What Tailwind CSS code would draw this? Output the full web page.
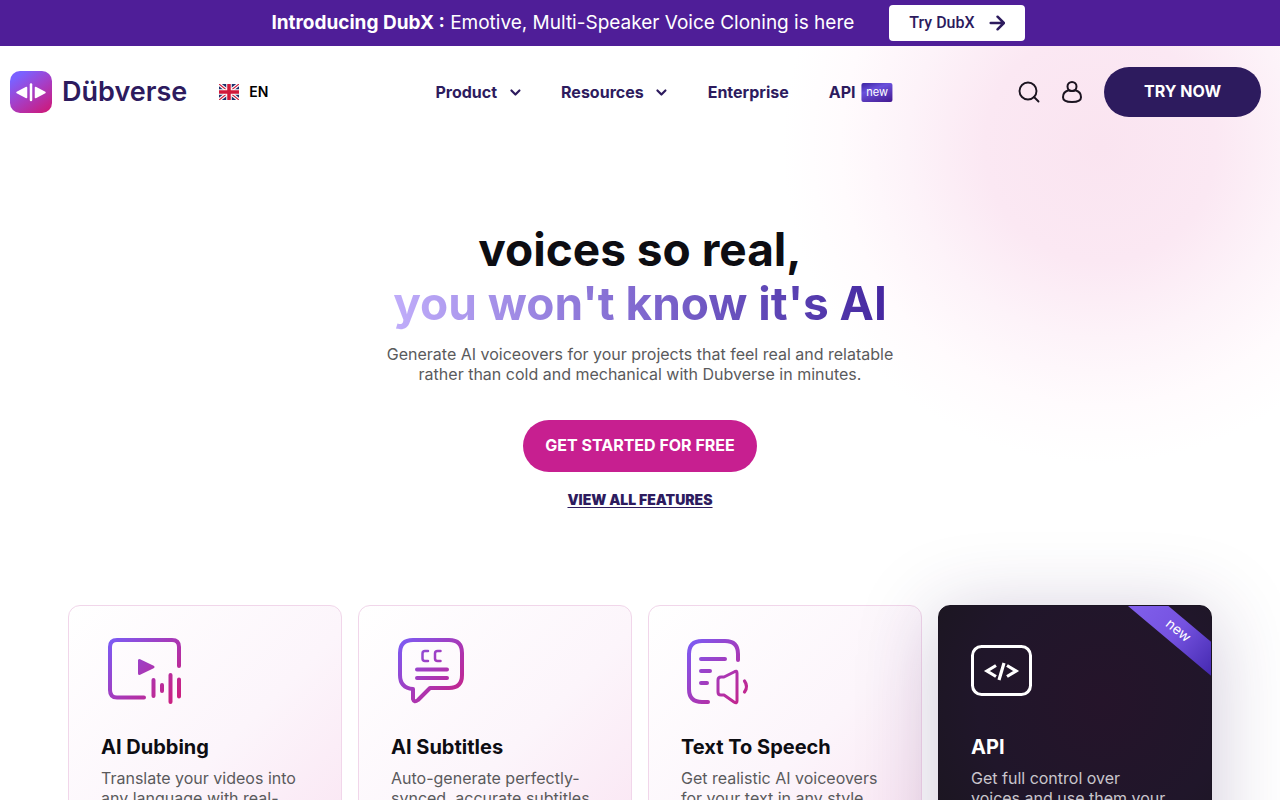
<!DOCTYPE html>
<html lang="en">
<head>
  <meta charset="UTF-8">
  <title>Dübverse</title>
  <meta name="viewport" content="width=device-width, initial-scale=1.0">
  <script src="https://cdn.jsdelivr.net/npm/@tailwindcss/browser@4"></script>
</head>
<body class="bg-white font-['Inter',sans-serif] text-[#0d0d12] overflow-x-hidden">
  <!-- Announcement bar -->
  <div class="relative z-10 bg-[#4f1e98] text-white flex items-center justify-center gap-[35px] pl-4 py-[5px]">
    <p class="text-[19px] leading-6"><strong class="font-bold">Introducing DubX :</strong> Emotive, Multi-Speaker Voice Cloning is here</p>
    <a href="#dubx" class="flex items-center gap-[14px] h-9 px-5 rounded bg-white text-[#2d1b5e] font-['Roboto',sans-serif] font-medium text-base">
      Try DubX
      <svg class="w-4 h-4" viewBox="0 0 14 14" fill="none" stroke="currentColor" stroke-width="2.2" stroke-linecap="round" stroke-linejoin="round"><path d="M1.500 7H13M7.500 1.500 13 7l-5.500 5.500"/></svg>
    </a>
  </div>

  <div class="relative overflow-hidden">
    <!-- Pink glow -->
    <div class="absolute -top-[240px] -right-[160px] w-[680px] h-[680px] bg-[radial-gradient(circle,#fae4f0_0%,#fbe8f3_24%,#fdf3f9_40%,#fffbfd_54%,#ffffff_66%)]"></div>

    <header class="relative flex items-center justify-between h-[92px] pl-[10px] pr-[19px]">
      <div class="flex items-center gap-8">
        <a href="#home" class="flex items-center gap-[10px]">
          <svg class="w-[42px] h-[42px]" viewBox="0 0 42 42">
            <defs>
              <linearGradient id="logo" x1="0.150" y1="0" x2="0.850" y2="1">
                <stop offset="0.1" stop-color="#7b61ff"/>
                <stop offset="0.5" stop-color="#a53fc8"/>
                <stop offset="1" stop-color="#cc1a7c"/>
              </linearGradient>
            </defs>
            <rect width="42" height="42" rx="10" fill="url(#logo)"/>
            <g fill="#fff" stroke="#fff" stroke-linejoin="round">
              <path d="M16.500 16.500v10L7 21.500zM25.500 16.500v10l9.500-5z" stroke-width="1.500"/>
              <path d="M21 13.500v15.500" stroke-width="2.500" stroke-linecap="round"/>
            </g>
          </svg>
          <span class="text-[27px] leading-8 font-semibold text-[#2d1b5e]">Dübverse</span>
        </a>
        <button type="button" class="flex items-center gap-[10px] text-sm font-semibold text-black">
          <svg class="w-5 h-4" viewBox="0 0 20 16">
            <path fill="#1d2f6b" d="M0 0h20v16H0z"/>
            <path stroke="#fff" stroke-width="3.500" d="m0 0 20 16M20 0 0 16"/>
            <path stroke="#d0223f" stroke-width="1.200" d="m0 0 20 16M20 0 0 16"/>
            <path stroke="#fff" stroke-width="5.500" d="M10 0v16M0 8h20"/>
            <path stroke="#d0183a" stroke-width="3.500" d="M10 0v16M0 8h20"/>
          </svg>
          EN
        </button>
      </div>

      <nav class="absolute left-1/2 -translate-x-1/2 ml-6 flex items-center gap-10 text-base font-bold text-[#2d1b5e]">
        <button type="button" class="flex items-center gap-3">Product
          <svg class="w-3 h-3" viewBox="0 0 12 12" fill="none" stroke="currentColor" stroke-width="2.200" stroke-linecap="round" stroke-linejoin="round"><path d="m2 4.500 4 4 4-4"/></svg>
        </button>
        <button type="button" class="flex items-center gap-3">Resources
          <svg class="w-3 h-3" viewBox="0 0 12 12" fill="none" stroke="currentColor" stroke-width="2.200" stroke-linecap="round" stroke-linejoin="round"><path d="m2 4.500 4 4 4-4"/></svg>
        </button>
        <a href="#enterprise">Enterprise</a>
        <a href="#api" class="flex items-center gap-[6px]">API
          <span class="w-[31px] h-[19px] rounded-xs bg-linear-160 from-[#3a22a0] via-[#6a50dc] via-35% to-[#43168f] text-white text-[11px] leading-[18px] text-center font-normal">new</span>
        </a>
      </nav>

      <div class="flex items-center gap-[22px]">
        <button type="button" aria-label="Search">
          <svg class="w-[22px] h-[22px]" viewBox="0 0 22 22" fill="none" stroke="#1b1420" stroke-width="1.900" stroke-linecap="round"><circle cx="10" cy="10" r="8.500"/><path d="m16 16 4.500 4.500"/></svg>
        </button>
        <button type="button" aria-label="Account">
          <svg class="w-5 h-[22px]" viewBox="0 0 20 22" fill="none" stroke="#1b1420" stroke-width="2"><circle cx="10" cy="5.500" r="4.500"/><path d="M6.500 9.300C3 10.300 1 13 1 16.200 1 19.500 4 21 10 21s9-1.500 9-4.800c0-3.200-2-5.900-5.500-6.900-2.200.9-4.800.9-7 0z"/></svg>
        </button>
        <a href="#try" class="h-[50px] px-10 rounded-full bg-[#2d1b5e] text-white text-base leading-[48px] font-bold">TRY NOW</a>
      </div>
    </header>

    <main class="relative">
      <section class="flex flex-col items-center text-center pt-[84px]">
        <h1 class="text-[46px] leading-[54px] font-bold">
          voices so real,<br>
          <span class="inline-block bg-linear-to-r from-[#c0adfa] via-[#8068cf] to-[#4526a0] bg-clip-text text-transparent">you won't know it's AI</span>
        </h1>
        <p class="mt-[14px] text-base leading-5 text-[#5a5a5c]">Generate AI voiceovers for your projects that feel real and relatable<br>rather than cold and mechanical with Dubverse in minutes.</p>
        <a href="#start" class="mt-[36px] h-[52px] px-[22px] rounded-full bg-[#c71f90] text-white text-base leading-[50px] font-bold">GET STARTED FOR FREE</a>
        <a href="#features" class="mt-[18px] text-sm leading-5 font-black text-[#2d1b5e] underline underline-offset-2">VIEW ALL FEATURES</a>
      </section>

      <section class="grid grid-cols-4 gap-4 max-w-[1144px] mx-auto mt-[95px]">
        <article class="h-[320px] rounded-xl border border-[#f1d6ea] bg-linear-135 from-white via-[#fcf5fb] to-[#f9e0f0] px-8 pt-8">
          <svg class="w-20 h-[68px]" viewBox="0 0 80 68" fill="none" stroke="url(#tint)" stroke-width="4" stroke-linecap="round" stroke-linejoin="round">
            <defs>
              <linearGradient id="tint" gradientUnits="userSpaceOnUse" x1="8" y1="2" x2="74" y2="64">
                <stop offset="0" stop-color="#7b5cf5"/>
                <stop offset="0.550" stop-color="#aa36b4"/>
                <stop offset="1" stop-color="#cc1f7f"/>
              </linearGradient>
            </defs>
            <path d="M78 28V9q0-7-7-7H16q-7 0-7 7v43q0 7.500 7 7.500h27"/>
            <path d="M38.500 22.500v13L52 29z" fill="url(#tint)" stroke-width="3"/>
            <path d="M52.500 42v16M61 47v6M69.500 37v27M78 41.500v17"/>
          </svg>
          <h2 class="mt-[29px] text-xl leading-6 font-bold">AI Dubbing</h2>
          <p class="mt-[9px] text-base leading-5 text-[#5a5a5c]">Translate your videos into<br>any language with real-</p>
        </article>

        <article class="h-[320px] rounded-xl border border-[#f1d6ea] bg-linear-135 from-white via-[#fcf5fb] to-[#f9e0f0] px-8 pt-8">
          <svg class="w-20 h-[68px]" viewBox="0 0 80 68" fill="none" stroke="url(#tint)" stroke-width="4" stroke-linecap="round" stroke-linejoin="round">
            <path d="M22 2h36q13 0 13 13v22q0 13-13 13H39L27 62q-4 3-5-1V51Q9 50 9 37V15Q9 2 22 2z"/>
            <path d="M26 31.500h30M26 40h30"/>
            <path d="M37 13h-3q-2.500 0-2.500 2.500v5Q31.500 23 34 23h3M49.500 13h-3q-2.500 0-2.500 2.500v5q0 2.500 2.500 2.500h3" stroke-width="2.500"/>
          </svg>
          <h2 class="mt-[29px] text-xl leading-6 font-bold">AI Subtitles</h2>
          <p class="mt-[9px] text-base leading-5 text-[#5a5a5c]">Auto-generate perfectly-<br>synced, accurate subtitles</p>
        </article>

        <article class="h-[320px] rounded-xl border border-[#f1d6ea] bg-linear-135 from-white via-[#fcf5fb] to-[#f9e0f0] px-8 pt-8">
          <svg class="w-20 h-[68px]" viewBox="0 0 80 68" fill="none" stroke="url(#tint)" stroke-width="4" stroke-linecap="round" stroke-linejoin="round">
            <path d="M57 22V16Q57 3 44 3H21Q8 3 8 16v35q0 13 13 13h6"/>
            <path d="M20 21h24M20 33h9M20 45h6"/>
            <path d="M43 39h-3q-3 0-3 3v12q0 3 3 3h3l10 7q3 2 3-1V35q0-3-3-1z" stroke-width="3"/>
            <path d="M63.500 43q4 5.500 0 11" stroke-width="3.200"/>
          </svg>
          <h2 class="mt-[29px] text-xl leading-6 font-bold">Text To Speech</h2>
          <p class="mt-[9px] text-base leading-5 text-[#5a5a5c]">Get realistic AI voiceovers<br>for your text in any style</p>
        </article>

        <article class="relative h-[320px] rounded-xl border border-[#1b1422] bg-[radial-gradient(circle_at_60%_30%,#25142a_0%,#20162a_45%,#1b1620_75%)] px-8 pt-8 shadow-[0_10px_80px_rgba(60,30,100,0.250)]">
          <div class="absolute inset-0 overflow-hidden rounded-[11px]">
            <span class="absolute -right-8 top-[12px] w-[130px] h-[26px] rotate-40 bg-linear-to-r from-[#8362ee] via-[#7552e0] to-[#3c1ea6] text-center text-white text-sm leading-6">new</span>
          </div>
          <svg class="w-20 h-[68px]" viewBox="0 0 80 68" fill="none" stroke="#fff" stroke-width="3" stroke-linecap="round" stroke-linejoin="round">
            <rect x="1.500" y="8.500" width="58" height="48" rx="9"/>
            <path d="m25 27.500-9 5.500 9 5.500M36 27.500l9 5.500-9 5.500M33 25l-5 17" stroke-width="3.200" stroke-linecap="butt" stroke-linejoin="miter"/>
          </svg>
          <h2 class="mt-[29px] text-xl leading-6 font-bold text-white">API</h2>
          <p class="mt-[9px] text-base leading-5 text-[#c9c5cc]">Get full control over<br>voices and use them your</p>
        </article>
      </section>
    </main>
  </div>
</body>
</html>
